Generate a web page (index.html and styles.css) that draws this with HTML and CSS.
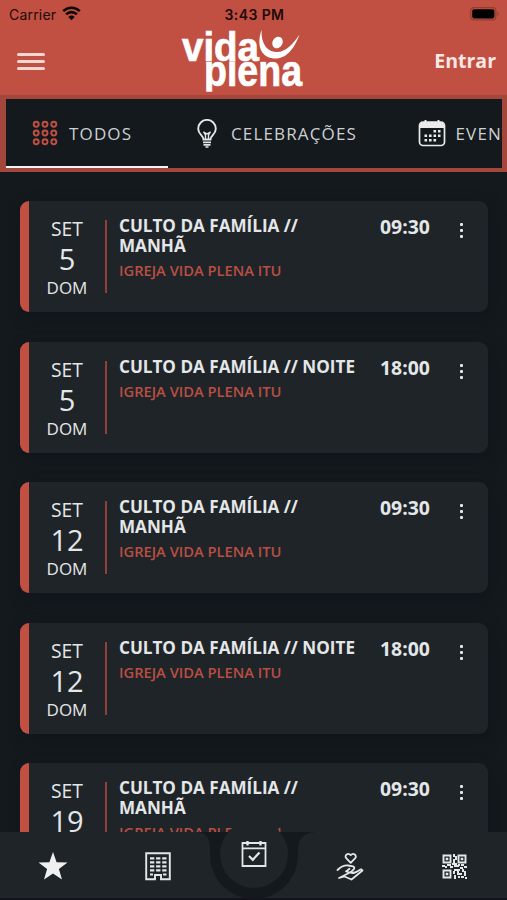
FILE: index.html
```html
<!DOCTYPE html>
<html lang="pt-BR">

<head>
    <meta charset="UTF-8" />
    <meta name="viewport" content="width=device-width, initial-scale=1" />
    <title>Vida Plena</title>
    <link rel="stylesheet" href="styles.css">
</head>

<body>

    <header class="header">
        <div class="status-bar">
            <div class="carrier">
                <span>Carrier</span>
                <svg width="19" height="15" viewBox="0 0 19 15">
                    <g fill="none" stroke="#100808" stroke-width="2.6">
                        <path d="M1.2 5.2a11.8 11.8 0 0 1 16.6 0" />
                        <path d="M4.1 8.4a7.6 7.6 0 0 1 10.8 0" />
                    </g>
                    <path d="M9.5 14.2 6.3 10.9a4.5 4.5 0 0 1 6.4 0z" fill="#100808" />
                </svg>
            </div>
            <div class="clock">3:43 PM</div>
            <svg class="battery" width="30" height="14" viewBox="0 0 30 14">
                <rect x="0.7" y="0.7" width="25.2" height="12.2" rx="3.2" fill="none" stroke="#923c32" stroke-width="1.2" />
                <rect x="2.2" y="2.2" width="22.2" height="9.2" rx="1.8" fill="#000" />
                <path d="M27.5 4.6a2.6 2.6 0 0 1 0 4.4z" fill="#923c32" />
            </svg>
        </div>
        <div class="title-bar">
            <button class="menu-btn" aria-label="Menu"><span></span><span></span><span></span></button>
            <svg class="logo" width="124" height="66" viewBox="0 0 124 66">
                <clipPath id="lowerWord">
                    <rect x="0" y="33.4" width="124" height="30.4" />
                </clipPath>
                <g class="logo-text">
                    <text class="logo-top" x="1" y="32.700" textLength="77" lengthAdjust="spacingAndGlyphs">vida</text>
                    <text class="logo-bottom" x="23" y="58.200" textLength="98" lengthAdjust="spacingAndGlyphs" clip-path="url(#lowerWord)">plena</text>
                </g>
                <path d="M80.500 2C76 15 78 29 93 30.500C106 31.500 114 19 118.500 6.500C112 16 105 24 96 24C87 24 80 17 80.500 2z" fill="#fff" />
                <ellipse cx="96.500" cy="14.500" rx="5" ry="6" transform="rotate(30 96.500 14.500)" fill="#fff" />
            </svg>
            <a class="login" href="#">Entrar</a>
        </div>
    </header>

    <nav class="tabs">
        <a class="tab tab-all active" href="#">
            <svg width="26" height="26" viewBox="0 0 26 26" fill="none" stroke="#c15042" stroke-width="1.900">
                <circle cx="4.200" cy="4.200" r="2.500" /><circle cx="13" cy="4.200" r="2.500" /><circle cx="21.800" cy="4.200" r="2.500" />
                <circle cx="4.200" cy="13" r="2.500" /><circle cx="13" cy="13" r="2.500" /><circle cx="21.800" cy="13" r="2.500" />
                <circle cx="4.200" cy="21.800" r="2.500" /><circle cx="13" cy="21.800" r="2.500" /><circle cx="21.800" cy="21.800" r="2.500" />
            </svg>
            <span>TODOS</span>
        </a>
        <a class="tab tab-celebrations" href="#">
            <svg width="20" height="29" viewBox="0 0 20 29" fill="none" stroke="#e4e7e8" stroke-width="1.900">
                <path d="M6.500 20.500C6.500 16.500 1.200 15.500 1.200 9.700a8.800 8.800 0 0 1 17.600 0C18.800 15.500 13.500 16.500 13.500 20.500z" />
                <path d="M8.500 20V16L6.500 12.700M11.500 20V16L13.500 12.700M7 13.500l3 1.300 3-1.300" stroke-width="1.400" />
                <path d="M6 23.300h8M6.500 25.800h7M8.500 28h3" stroke-width="1.700" />
            </svg>
            <span>CELEBRAÇÕES</span>
        </a>
        <a class="tab tab-events" href="#">
            <svg width="28" height="28" viewBox="0 0 28 28">
                <path d="M5 3h18a3.500 3.500 0 0 1 3.500 3.500V23a3.500 3.500 0 0 1-3.500 3.500H5A3.500 3.500 0 0 1 1.500 23V6.500A3.500 3.500 0 0 1 5 3z" fill="none" stroke="#e9ebec" stroke-width="1.700" />
                <path d="M2 9V6a3 3 0 0 1 3-3h18a3 3 0 0 1 3 3v3zM6.500 1h2v3h-2zM19.500 1h2v3h-2z" fill="#e9ebec" />
                <path d="M15.500 12.200h7M6.500 16.700h16M6.500 21.200h12" stroke="#e9ebec" stroke-width="2.600" stroke-dasharray="2.600 1.900" />
            </svg>
            <span>EVENTOS</span>
        </a>
    </nav>

    <main class="events">
        <article class="event">
            <div class="date"><span class="month">SET</span><span class="day">5</span><span class="weekday">DOM</span></div>
            <div class="info">
                <h2>CULTO DA FAMÍLIA // MANHÃ</h2>
                <p>IGREJA VIDA PLENA ITU</p>
            </div>
            <time>09:30</time>
            <button class="more" aria-label="Mais"><i></i><i></i><i></i></button>
        </article>
        <article class="event">
            <div class="date"><span class="month">SET</span><span class="day">5</span><span class="weekday">DOM</span></div>
            <div class="info">
                <h2>CULTO DA FAMÍLIA // NOITE</h2>
                <p>IGREJA VIDA PLENA ITU</p>
            </div>
            <time>18:00</time>
            <button class="more" aria-label="Mais"><i></i><i></i><i></i></button>
        </article>
        <article class="event">
            <div class="date"><span class="month">SET</span><span class="day">12</span><span class="weekday">DOM</span></div>
            <div class="info">
                <h2>CULTO DA FAMÍLIA // MANHÃ</h2>
                <p>IGREJA VIDA PLENA ITU</p>
            </div>
            <time>09:30</time>
            <button class="more" aria-label="Mais"><i></i><i></i><i></i></button>
        </article>
        <article class="event">
            <div class="date"><span class="month">SET</span><span class="day">12</span><span class="weekday">DOM</span></div>
            <div class="info">
                <h2>CULTO DA FAMÍLIA // NOITE</h2>
                <p>IGREJA VIDA PLENA ITU</p>
            </div>
            <time>18:00</time>
            <button class="more" aria-label="Mais"><i></i><i></i><i></i></button>
        </article>
        <article class="event">
            <div class="date"><span class="month">SET</span><span class="day">19</span><span class="weekday">DOM</span></div>
            <div class="info">
                <h2>CULTO DA FAMÍLIA // MANHÃ</h2>
                <p>IGREJA VIDA PLENA ITU</p>
            </div>
            <time>09:30</time>
            <button class="more" aria-label="Mais"><i></i><i></i><i></i></button>
        </article>
    </main>

    <footer class="bottom-nav">
        <!-- notch and round button behind the calendar icon -->
        <svg class="notch" width="120" height="82" viewBox="0 0 120 82">
            <path d="M0 14H120C108 15 103 20 102 30V37A44 44 0 0 1 14 37V30C13 20 12 15 0 14z" fill="#14191d" />
            <circle cx="58" cy="36" r="34" fill="#1f2429" />
        </svg>
        <a class="nav-item" href="#">
            <svg width="30" height="30" viewBox="0 0 30 30">
                <path d="M15 1 18.600 11.200 29.500 11.500 20.900 18.100 24 28.600 15 22.400 6 28.600 9.100 18.100 .5 11.500 11.400 11.200z" fill="#eef0f1" />
            </svg>
        </a>
        <a class="nav-item" href="#">
            <svg width="26" height="29" viewBox="0 0 26 29" fill="none" stroke="#e4e7e8">
                <path d="M10 27.200H1.200V1.200H24.800V27.200H16V23H10z" stroke-width="1.900" />
                <path d="M5 6.300h16.500M5 10.300h16.500M5 14.300h16.500M5 18.300h16.500" stroke-width="2.200" stroke-dasharray="4.300 1.800" />
                <path d="M5 22.500h3M18 22.500h3.500" stroke-width="2.200" />
            </svg>
        </a>
        <a class="nav-item current" href="#">
            <svg width="26" height="28" viewBox="0 0 26 28" fill="none" stroke="#e4e7e8" stroke-width="1.800">
                <path d="M1.500 3H24.500V26H1.500zM1.500 8.300h23" />
                <path d="M6.500 1v4.500M19.500 1v4.500" stroke-width="2.400" />
                <path d="M8 16 11.800 19.800 18.500 12.500" stroke-width="2.200" />
            </svg>
        </a>
        <a class="nav-item" href="#">
            <svg width="28" height="29" viewBox="0 0 28 29" fill="none" stroke="#e4e7e8" stroke-width="1.800" stroke-linejoin="round" stroke-linecap="round">
                <path d="M14.700 10.800 10.200 6.200C8 3.500 12 .2 14.700 3.200 17.400 .2 21.400 3.500 19.200 6.200z" />
                <path d="M1.500 18C5 14.500 8 13.200 12 13.500L17 14.300C20 15.500 17.500 18 14 20.500L10 19.500 13.500 16.800M14 20.500C18 22 20 20 25 17.300L26.500 18.500 15.500 27.500 8.500 24.500 3 26z" />
            </svg>
        </a>
        <a class="nav-item" href="#">
            <svg width="25" height="25" viewBox="0 0 25 25" fill="#e4e7e8">
                <g fill="none" stroke="#e4e7e8" stroke-width="1.900">
                    <path d="M1.500 1.500h7v7h-7zM16.500 1.500h7v7h-7zM1.500 16.500h7v7h-7z" />
                </g>
                <path d="M3.700 3.700h2.600v2.600H3.700zM18.700 3.700h2.600v2.600h-2.600zM3.700 18.700h2.600v2.600H3.700z" />
                <path d="M11 0h2v3h-2zM13 2h2v4h-2zM11 5h2v4h-2zM0 11h3v2H0zM3 12h2v2H3zM5 10h4v2H5zM8 12h3v2H8zM10 9h5v2h-5zM12 11h5v2h-5zM16 10h2v2h-2zM19 10h3v2h-3zM22 12h3v2h-3zM18 13h3v2h-3zM12 15h6v2h-6zM11 17h2v3h-2zM15 17h2v4h-2zM12 21h2v4h-2zM17 19h3v2h-3zM20 15h2v3h-2zM22 17h2v3h-2zM19 22h3v2h-3zM22 20h2v2h-2zM16 22h2v2h-2zM23 23h2v2h-2z" />
            </svg>
        </a>
    </footer>

</body>

</html>
```

FILE: styles.css
```css
* {
    box-sizing: border-box;
}

body {
    margin: 0;
    height: 900px;
    overflow: hidden;
    display: flex;
    flex-direction: column;
    background: #14191d;
    color: #e4e7e8;
    font-family: "Open Sans", sans-serif;
}

a {
    color: inherit;
    text-decoration: none;
}

button {
    padding: 0;
    border: none;
    background: none;
}

svg {
    display: block;
}

.header {
    flex: none;
    height: 95px;
    background: #c15042;
}

.status-bar {
    display: grid;
    grid-template-columns: 1fr auto 1fr;
    align-items: center;
    height: 28px;
    padding: 0 7px 0 9px;
    color: #1c0b09;
    font-family: Inter, sans-serif;
    font-size: 14px;
}

.carrier {
    display: flex;
    align-items: center;
    gap: 6px;
    letter-spacing: 0.2px;
}

.carrier svg {
    margin-top: -2px;
}

.clock {
    font-weight: 600;
    letter-spacing: 0.4px;
}

.battery {
    justify-self: end;
    margin-top: -1px;
}

.title-bar {
    display: grid;
    grid-template-columns: 164px auto 1fr;
    align-items: center;
    height: 66px;
    padding: 0 11px 0 17px;
}

.logo {
    overflow: visible;
}

.menu-btn {
    display: flex;
    flex-direction: column;
    gap: 4px;
    width: 28px;
}

.menu-btn span {
    height: 3px;
    border-radius: 2px;
    background: #f3d7d3;
}

.logo-text {
    fill: #fff;
    stroke: #fff;
    stroke-width: 0.7px;
    font-family: "Liberation Sans", sans-serif;
    font-weight: bold;
}

.logo-top {
    font-size: 41px;
}

.logo-bottom {
    font-size: 44px;
}

.login {
    justify-self: end;
    margin-top: -2px;
    color: #f9e7e4;
    font-size: 19.500px;
    font-weight: bold;
}

.tabs {
    flex: none;
    display: flex;
    height: 77px;
    border: solid #a3473c;
    border-width: 4px 5px 4px 6px;
    overflow: hidden;
    background: #14191d;
}

.tab {
    flex: none;
    display: flex;
    align-items: center;
    height: 69px;
    color: #ccd0d2;
    font-size: 17px;
    letter-spacing: 1.150px;
    white-space: nowrap;
}

.tab-all {
    width: 162px;
    padding-left: 26px;
    gap: 11px;
}

.tab-celebrations {
    width: 222px;
    padding-left: 29px;
    gap: 14px;
}

.tab-events {
    padding-left: 27.500px;
    gap: 10px;
}

.tab svg {
    margin-top: -1px;
}

.tab.active {
    border-bottom: 2px solid #f0f2f3;
    padding-top: 2px;
}

.events {
    flex: 1;
    min-height: 0;
    overflow: hidden;
    display: flex;
    flex-direction: column;
    gap: 29.6px;
    padding: 29px 19px 0 20px;
}

.event {
    flex: none;
    display: flex;
    align-items: flex-start;
    height: 111px;
    padding-top: 19px;
    border-left: 9px solid #c15042;
    border-radius: 9px;
    background: #1f2429;
    box-shadow: 3px 5px 14px #10151c;
}

.date {
    display: flex;
    flex-direction: column;
    align-items: center;
    width: 78px;
    height: 73px;
    border-right: 2px solid #923f38;
}

.month {
    font-size: 19.300px;
    line-height: 17px;
}

.day {
    margin-top: 5px;
    font-size: 29px;
    line-height: 34px;
}

.weekday {
    margin-top: 3px;
    font-size: 17px;
    line-height: 18px;
}

.info {
    width: 273px;
    margin-top: -4px;
    padding-left: 12px;
}

.info h2 {
    width: 245px;
    margin: 0;
    font-size: 17.100px;
    font-weight: bold;
    line-height: 19.500px;
}

.info p {
    margin: 5.500px 0 0;
    color: #b94e43;
    font-size: 14.700px;
    font-weight: 600;
    line-height: 19px;
}

.event time {
    width: 62px;
    margin-top: -5px;
    font-size: 19.400px;
    font-weight: bold;
    line-height: 24px;
}

.more {
    display: flex;
    flex-direction: column;
    align-items: center;
    gap: 3px;
    width: 38px;
    margin-top: 3px;
}

.more i {
    width: 3px;
    height: 3px;
    border-radius: 1px;
    background: #e4e7e8;
}

.bottom-nav {
    position: relative;
    flex: none;
    display: grid;
    grid-template-columns: 105px 105px 87px 105px 105px;
    justify-items: center;
    height: 68px;
    border-bottom: 2px solid #14131c;
    background: #1f2429;
}

.nav-item {
    position: relative;
    display: flex;
    align-items: center;
    height: 68px;
}

.nav-item.current {
    height: 44px;
}

.notch {
    position: absolute;
    left: 196px;
    top: -14px;
}
```
